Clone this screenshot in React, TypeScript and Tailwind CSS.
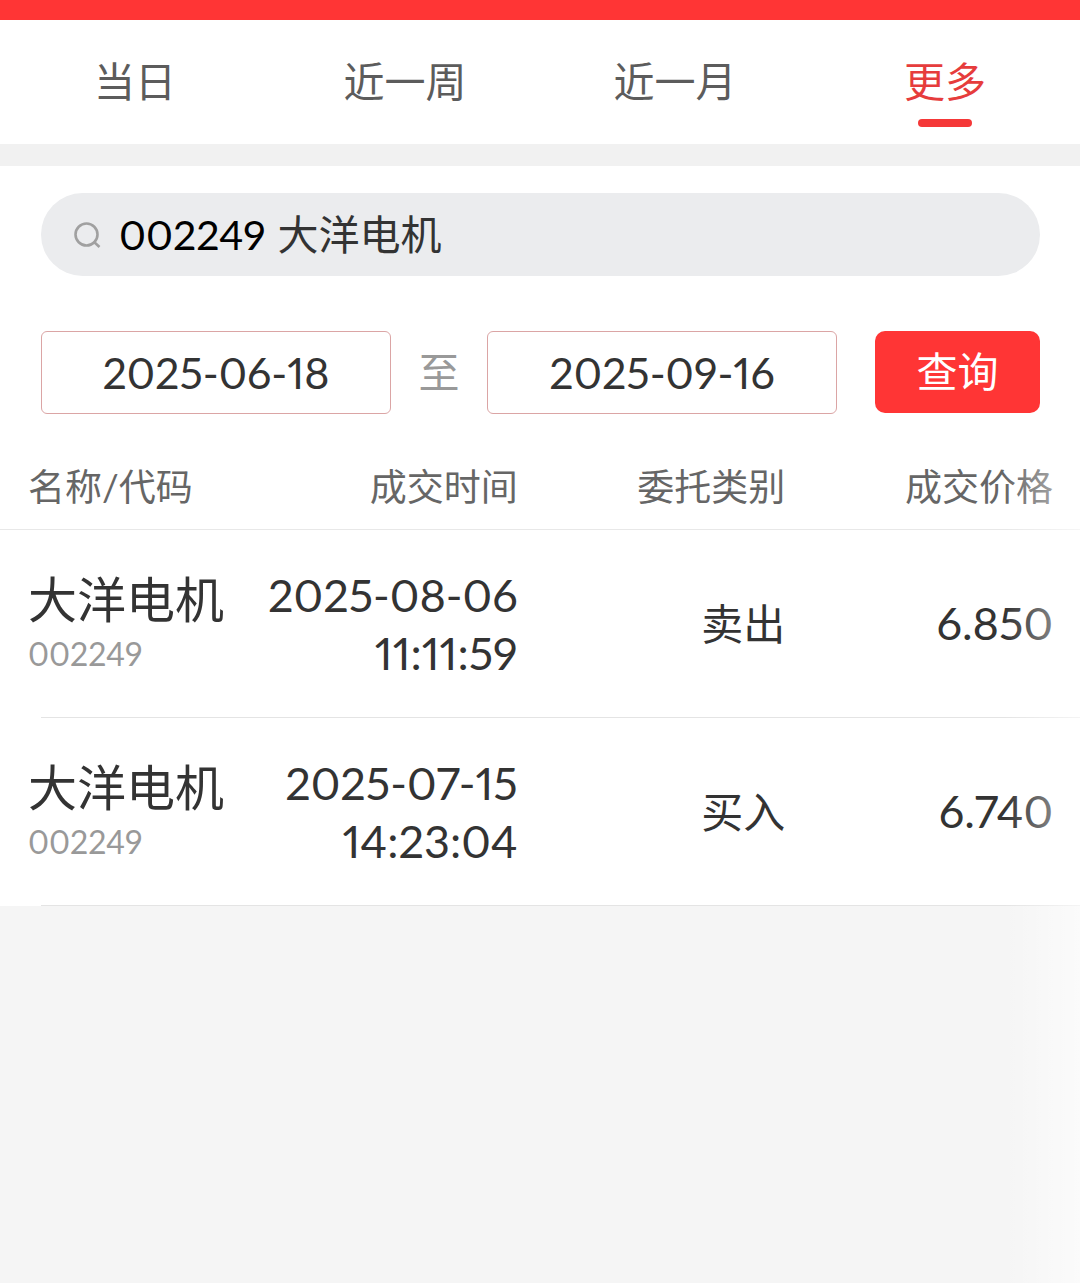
import { useState } from "react";
import clsx from "clsx";

const TABS = ["当日", "近一周", "近一月", "更多"];

const COLUMNS = ["名称/代码", "成交时间", "委托类别", "成交价格"];

const TRADES = [
  {
    name: "大洋电机",
    code: "002249",
    date: "2025-08-06",
    time: "11:11:59",
    side: "卖出",
    price: "6.850",
  },
  {
    name: "大洋电机",
    code: "002249",
    date: "2025-07-15",
    time: "14:23:04",
    side: "买入",
    price: "6.740",
  },
];

function RangeTabs() {
  const [active, setActive] = useState("更多");

  return (
    <nav className="grid h-[124px] grid-cols-4 bg-white">
      {TABS.map((tab) => (
        <button
          key={tab}
          type="button"
          onClick={() => setActive(tab)}
          className={clsx(
            "relative text-[41px]",
            tab === active ? "text-[#e63c3c]" : "text-[#5c5c5c]",
          )}
        >
          {tab}
          {tab === active && (
            <span className="absolute bottom-[17px] left-1/2 h-2 w-[54px] -translate-x-1/2 rounded-full bg-[#f53838]" />
          )}
        </button>
      ))}
    </nav>
  );
}

function SearchBar() {
  const [code, setCode] = useState("002249");

  return (
    <label className="flex h-[83px] items-center rounded-full bg-[#ebecee] pl-8">
      <svg
        className="h-7 w-7 shrink-0 text-[#a0a0a0]"
        viewBox="0 0 28 28"
        fill="none"
        stroke="currentColor"
        strokeWidth={2.6}
        aria-hidden
      >
        <circle cx="13.5" cy="13.5" r="11" />
        <path d="M20.5 20.5l6 5.5" />
      </svg>
      <input
        value={code}
        onChange={(e) => setCode(e.target.value)}
        aria-label="代码"
        className="ml-[18px] field-sizing-content text-[41px] text-black outline-none"
      />
      <span className="ml-3 text-[41px] text-[#333333]">大洋电机</span>
    </label>
  );
}

function DateField({ label, initial }: { label: string; initial: string }) {
  const [value, setValue] = useState(initial);

  return (
    <input
      aria-label={label}
      value={value}
      onChange={(e) => setValue(e.target.value)}
      className="h-[83px] min-w-0 flex-1 rounded-md border border-[#dba5a5] bg-white text-center text-[43px] text-[#333333] outline-none"
    />
  );
}

function TradeTable() {
  return (
    <div className="relative flex grow flex-col">
      <table className="w-full table-fixed border-separate border-spacing-0 bg-white">
        <thead>
          <tr className="h-[86px] text-[37px] text-[#666666]">
            {COLUMNS.map((column, i) => (
              <th
                key={column}
                className={clsx(
                  "border-b border-[#e8e8e8] p-0 font-normal",
                  i === 0 ? "w-[277px] pl-7 text-left" : "pr-[27px] text-right",
                )}
              >
                {column}
              </th>
            ))}
          </tr>
        </thead>
        <tbody className="text-[#333333]">
          {TRADES.map((trade) => (
            <tr
              key={trade.date}
              className="h-[188px] bg-[linear-gradient(#e4e4e4,#e4e4e4)] bg-[length:100%_1px] bg-[position:41px_100%] bg-no-repeat"
            >
              <td className="p-0 pl-7">
                <div className="text-[49px] leading-[60px]">{trade.name}</div>
                <div className="text-[32px] leading-[50px] text-[#999999]">{trade.code}</div>
              </td>
              <td className="p-0 pr-[27px] text-right text-[45px] leading-[58px]">
                <div className="flex flex-col items-end whitespace-nowrap">
                  <span>{trade.date}</span>
                  <span>{trade.time}</span>
                </div>
              </td>
              <td className="p-0 pr-[27px] text-right text-[42px]">{trade.side}</td>
              <td className="p-0 pr-[27px] text-right text-[45px]">{trade.price}</td>
            </tr>
          ))}
        </tbody>
      </table>
      <div className="pointer-events-none absolute inset-y-0 right-0 w-[76px] bg-linear-to-r from-white/0 to-white/60" />
    </div>
  );
}

export default function App() {
  return (
    <div className="flex min-h-screen flex-col bg-[#f5f5f5] font-['Lato','Noto_Sans_CJK_SC',sans-serif] proportional-nums">
      <header className="h-5 bg-[#ff3535]" />
      <RangeTabs />
      <main className="flex grow flex-col border-t-[22px] border-[#f1f1f1]">
        <form
          className="bg-white pt-[27px] pr-10 pb-[30px] pl-[41px]"
          onSubmit={(e) => e.preventDefault()}
        >
          <SearchBar />
          <div className="mt-[55px] flex items-start">
            <DateField label="开始日期" initial="2025-06-18" />
            <span className="w-24 text-center text-[41px] leading-[83px] text-[#999999]">至</span>
            <DateField label="结束日期" initial="2025-09-16" />
            <button
              type="submit"
              className="ml-[38px] h-[82px] w-[165px] rounded-[10px] bg-[#ff3535] text-[41px] text-white"
            >
              查询
            </button>
          </div>
        </form>
        <TradeTable />
      </main>
    </div>
  );
}
